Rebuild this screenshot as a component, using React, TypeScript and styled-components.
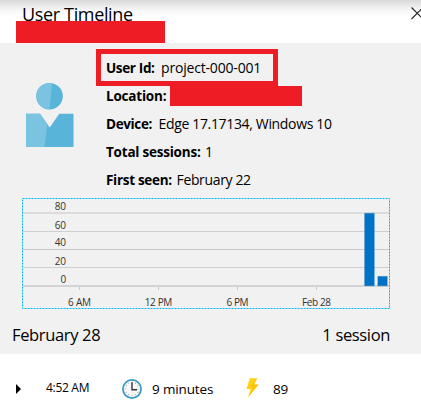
import React from 'react';
import styled, { createGlobalStyle } from 'styled-components';

const GlobalStyle = createGlobalStyle`
  * { box-sizing: border-box; }
  body { margin: 0; background: #fff; color: #000; font-family: "Open Sans", "Noto Sans", sans-serif; overflow: hidden; }
`;

const Panel = styled.div`
  width: 421px;
  height: 416px;
  overflow: hidden;
  background: #fff;
`;

const Header = styled.header`
  display: flex;
  justify-content: space-between;
  height: 43px;
  padding-left: 16px;
  background: linear-gradient(#d9d9d9 0, #e8e8e8 5px, #f8f8f8 11px, #fff 17px);
`;

const Heading = styled.div`
  display: flex;
  flex-direction: column;
  justify-content: space-between;
`;

const Title = styled.h1`
  margin: 1px 0 0 6px;
  font-size: 18px;
  line-height: 26px;
  height: 20px;
  font-weight: 400;
  letter-spacing: -0.35px;
  white-space: nowrap;
`;

const Redaction = styled.div<{ $w: number; $h: number }>`
  flex: none;
  width: ${p => p.$w}px;
  height: ${p => p.$h}px;
  background: #ee1c24;
`;

const CloseIcon = styled.svg`
  flex: none;
  margin-top: 7px;
  width: 10px;
  height: 13px;
  overflow: visible;
`;

const Body = styled.section`
  height: 311px;
  background: #f1f1f1;
`;

const Profile = styled.div`
  display: flex;
  height: 155px;
  padding: 6px 0 0 26px;
`;

const Avatar = styled.svg`
  flex: none;
  width: 48px;
  height: 65px;
  margin: 33px 22px 0 0;
`;

const Details = styled.div`
  display: flex;
  flex-direction: column;
`;

const Detail = styled.div`
  display: flex;
  align-items: center;
  height: 28px;
  padding-left: 10px;
  font-size: 14px;
  line-height: 20px;
  white-space: nowrap;
`;

const BoxedDetail = styled(Detail)`
  width: 182px;
  height: 37px;
  margin-bottom: -4px;
  padding: 1px 0 0 5px;
  border: 5px solid #ee1c24;
`;

const Label = styled.span<{ $w: number; $track?: number }>`
  flex: none;
  width: ${p => p.$w}px;
  font-size: 13.5px;
  font-weight: 700;
  letter-spacing: ${p => p.$track ?? -0.35}px;
`;

const Value = styled.span<{ $track?: number }>`
  letter-spacing: ${p => p.$track ?? 0}px;
`;

const Chart = styled.svg`
  display: block;
  width: 368px;
  height: 111px;
  margin-left: 22px;
  font-family: "Open Sans", sans-serif;
  font-size: 10px;
  fill: #333;
`;

const DayRow = styled.div`
  display: flex;
  justify-content: space-between;
  align-items: center;
  height: 45px;
  padding: 5px 31px 0 12px;
  font-size: 16.5px;
`;

const Day = styled.span<{ $track: number }>`
  letter-spacing: ${p => p.$track}px;
`;

const SessionRow = styled.div`
  display: flex;
  align-items: center;
  height: 62px;
  padding: 7px 0 0 16px;
  font-size: 13.5px;
  line-height: 20px;
  white-space: nowrap;
`;

const Arrow = styled.svg`
  flex: none;
  width: 5px;
  height: 10px;
`;

const Time = styled.span`
  width: 76px;
  margin: -2px 0 0 25px;
  font-size: 12px;
  letter-spacing: -0.3px;
`;

const Clock = styled.svg`
  flex: none;
  width: 20px;
  height: 20px;
  margin-right: 10px;
`;

const Duration = styled.span`
  width: 94px;
  letter-spacing: -0.15px;
`;

const Bolt = styled.svg`
  flex: none;
  width: 13px;
  height: 20px;
  margin: -1px 14px 0 0;
`;

const gridLines = [
  { label: '80', y: 14, h: 2, c: '#dcdcdc', base: 12 },
  { label: '60', y: 33, h: 1, c: '#cfcfcf', base: 30.5 },
  { label: '40', y: 51, h: 1, c: '#cacaca', base: 48 },
  { label: '20', y: 69, h: 1, c: '#cfcfcf', base: 67 },
  { label: '0', y: 87, h: 2, c: '#d3d3d3', base: 85 },
];
const ticks = [
  { label: '6 AM', x: 57.5, w: 23 },
  { label: '12 PM', x: 136.5, w: 27.5 },
  { label: '6 PM', x: 215.5, w: 22 },
  { label: 'Feb 28', x: 294.5, w: 29 },
];
const bars = [
  { x: 342.6, y: 15.3, w: 9.7, h: 72.5 },
  { x: 355.8, y: 78.4, w: 9.5, h: 9.4 },
];

function ActivityChart() {
  return (
    <Chart viewBox="0 0 368 111">
      {gridLines.map(g => (
        <g key={g.label}>
          <rect x="1" y={g.y} width="366" height={g.h} fill={g.c} />
          <text x="44" y={g.base} textAnchor="end" letterSpacing="-0.1">{g.label}</text>
        </g>
      ))}
      {ticks.map(t => (
        <g key={t.label}>
          <rect x={t.x - 0.5} y="89" width="1" height="3" fill="#c8c8c8" />
          <text x={t.x - t.w / 2} y="108" textLength={t.w}>{t.label}</text>
        </g>
      ))}
      {bars.map(b => (
        <rect key={b.x} x={b.x} y={b.y} width={b.w} height={b.h} fill="#0072c6" stroke="#0072c6" strokeOpacity=".3" strokeWidth="1" />
      ))}
      <rect x="0.5" y="0.5" width="367" height="110" fill="none" stroke="#00b7f1" strokeDasharray="2 1" />
    </Chart>
  );
}

export default function App() {
  return (
    <>
      <GlobalStyle />
      <Panel>
        <Header>
          <Heading>
            <Title>User Timeline</Title>
            <Redaction $w={149} $h={22} />
          </Heading>
          <CloseIcon viewBox="0 0 10 13">
            <path d="M0.5 0.5L12 12M12 0.5L0.5 12" stroke="#222" strokeWidth="1.1" fill="none" />
          </CloseIcon>
        </Header>
        <Body>
          <Profile>
            <Avatar viewBox="0 0 48 65">
              <circle cx="23.5" cy="14.2" r="13.3" fill="#59b4d9" />
              <path d="M26.2 1.1A13.3 13.3 0 1 0 23.5 27.5Z" fill="#7ac3e1" />
              <path d="M0 31.7H14L23.7 45.4L33.3 31.7H47.5V65H0Z" fill="#59b4d9" />
              <path d="M0 31.7H14L21.4 42.2L18.5 65H0Z" fill="#7ac3e1" />
            </Avatar>
            <Details>
              <BoxedDetail>
                <Label $w={55}>User Id:</Label>
                <Value $track={-0.18}>project-000-001</Value>
              </BoxedDetail>
              <Detail>
                <Label $w={64} $track={-0.2}>Location:</Label>
                <Redaction $w={132} $h={20} />
              </Detail>
              <Detail>
                <Label $w={52.5}>Device:</Label>
                <Value $track={-0.34}>Edge 17.17134, Windows 10</Value>
              </Detail>
              <Detail>
                <Label $w={99} $track={-0.22}>Total sessions:</Label>
                <Value>1</Value>
              </Detail>
              <Detail>
                <Label $w={70.5} $track={-0.3}>First seen:</Label>
                <Value $track={-0.35}>February 22</Value>
              </Detail>
            </Details>
          </Profile>
          <ActivityChart />
          <DayRow>
            <Day $track={-0.35}>February 28</Day>
            <Day $track={-0.35}>1 session</Day>
          </DayRow>
        </Body>
        <SessionRow>
          <Arrow viewBox="0 0 5 10"><path d="M0 0L5 5L0 10Z" /></Arrow>
          <Time>4:52 AM</Time>
          <Clock viewBox="0 0 20 20">
            <circle cx="10" cy="10" r="9.1" fill="#f7f7f7" stroke="#3999c6" strokeWidth="1.7" />
            <circle cx="10" cy="10" r="6.7" fill="none" stroke="#999" strokeWidth="1.1" strokeDasharray="0.8 2.708" strokeDashoffset="0.4" />
            <path d="M10 3.3V10.7H15" fill="none" stroke="#333" strokeWidth="1.4" />
          </Clock>
          <Duration>9 minutes</Duration>
          <Bolt viewBox="0 0 13 20">
            <path d="M3.8 0.3H11.3L8 6.5H12.5L2 19.5L4.7 11H0.5Z" fill="#fcd116" />
            <path d="M11.3 0.3L4.2 8.8H7.5L2 19.5L12.5 6.5H8Z" fill="#ffb900" opacity=".6" />
          </Bolt>
          <Value $track={-0.1}>89</Value>
        </SessionRow>
      </Panel>
    </>
  );
}
